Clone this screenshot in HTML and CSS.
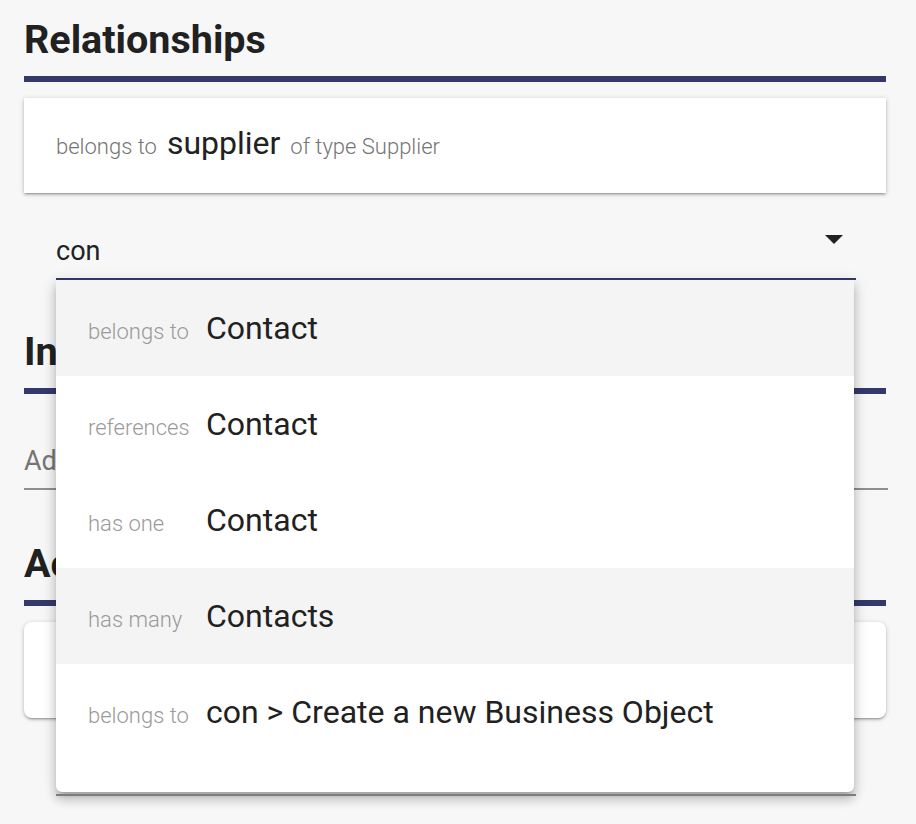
FILE: index.html
```html
<!DOCTYPE html>
<html lang="en">
<head>
    <meta charset="UTF-8">
    <title>Business Object - Relationships</title>
    <link rel="stylesheet" href="styles.css">
</head>
<body>

    <div class="page">

        <!-- Relationships -->
        <section class="section section-first">
            <h2 class="section-title">Relationships</h2>

            <div class="card relation-card">
                <span class="relation">
                    <span class="relation-kind">belongs to</span>
                    <span class="relation-name">supplier</span>
                    <span class="relation-kind">of type Supplier</span>
                </span>
            </div>

            <div class="field field-active">
                <input class="field-input" type="text" value="con">
                <svg class="field-arrow" viewBox="7 10 10 5" width="18" height="9">
                    <path d="M7 10l5 5 5-5z" fill="#212121"/>
                </svg>

                <!-- Autocomplete suggestions -->
                <ul class="menu">
                    <li class="menu-item active">
                        <span class="menu-kind">belongs to</span>
                        <span class="menu-target">Contact</span>
                    </li>
                    <li class="menu-item">
                        <span class="menu-kind">references</span>
                        <span class="menu-target">Contact</span>
                    </li>
                    <li class="menu-item">
                        <span class="menu-kind">has one</span>
                        <span class="menu-target">Contact</span>
                    </li>
                    <li class="menu-item active">
                        <span class="menu-kind">has many</span>
                        <span class="menu-target">Contacts</span>
                    </li>
                    <li class="menu-item">
                        <span class="menu-kind">belongs to</span>
                        <span class="menu-target">con &gt; Create a new Business Object</span>
                    </li>
                </ul>
            </div>
        </section>

        <!-- Inheritance -->
        <section class="section section-second">
            <h2 class="section-title">Inheritance</h2>
            <div class="field field-plain">
                <input class="field-input" type="text" placeholder="Add a parent">
            </div>
        </section>

        <!-- Actions -->
        <section class="section section-third">
            <h2 class="section-title">Actions</h2>
            <div class="card action-card">
                <span class="action-label">Create</span>
                <svg class="action-arrow" viewBox="0 0 24 24" width="24" height="24">
                    <path d="M10 17l5-5-5-5v10z" fill="#757575"/>
                </svg>
            </div>
        </section>

    </div>

</body>
</html>
```

FILE: styles.css
```css
body {
    margin: 0;
    background-color: #f7f7f7;
    color: #212121;
    font-family: Roboto, "Liberation Sans", sans-serif;
}

.page {
    min-height: 824px;
    box-sizing: border-box;
    padding: 0 30px 40px 24px;
}

.section-first {
    padding-top: 16px;
}

.section-second {
    margin-top: 48px;
}

.section-third {
    margin-top: 50px;
}

.section-title {
    margin: 0;
    padding-bottom: 12px;
    border-bottom: 6px solid #333a6b;
    font-size: 39.5px;
    line-height: 48px;
    font-weight: 700;
}

.card {
    background: #fff;
    box-shadow: 0 1px 5px rgba(0, 0, 0, 0.2), 0 2px 2px rgba(0, 0, 0, 0.14), 0 3px 1px -2px rgba(0, 0, 0, 0.12);
}

.relation-card {
    margin-top: 16px;
    height: 95px;
    box-sizing: border-box;
    padding: 0 32px 6px;
    display: flex;
    align-items: center;
}

.relation {
    display: flex;
    align-items: baseline;
    gap: 10px;
}

.relation-kind {
    font-size: 22px;
    font-weight: 300;
    color: #757575;
}

.relation-name {
    font-size: 32px;
}

/* text fields */
.field {
    position: relative;
}

.field-input {
    display: block;
    width: 100%;
    box-sizing: border-box;
    border: none;
    background: transparent;
    font-family: inherit;
    font-size: 27px;
    line-height: 32px;
    height: 43px;
    padding: 0 0 11px;
    color: #212121;
    outline: none;
}

.field-input::placeholder {
    color: #757575;
    opacity: 1;
}

.field-active {
    margin: 42px 30px 0 32px;
    border-bottom: 2px solid #333a6b;
}

.field-plain {
    margin: 51px -2px 0 0;
    border-bottom: 2px solid #8f8f8f;
}

.field-arrow {
    position: absolute;
    right: 13px;
    top: 0;
}

/* suggestion menu */
.menu {
    position: absolute;
    top: calc(100% + 2px);
    left: 0;
    right: 2px;
    margin: 0;
    padding: 0 0 32px;
    list-style: none;
    background: #fff;
    border-radius: 0 0 6px 6px;
    box-shadow: 0 5px 5px -3px rgba(0, 0, 0, 0.2), 0 8px 10px 1px rgba(0, 0, 0, 0.14), 0 3px 14px 2px rgba(0, 0, 0, 0.12);
    z-index: 10;
}

.menu::after {
    content: "";
    position: absolute;
    left: 0;
    right: -2px;
    bottom: -4px;
    height: 2px;
    background: #7d7d7d;
}

.menu-item {
    display: flex;
    align-items: baseline;
    height: 96px;
    padding: 0 32px;
    line-height: 96px;
}

.menu-item.active {
    background: #f4f4f4;
}

.menu-kind {
    width: 118px;
    flex-shrink: 0;
    font-size: 22px;
    font-weight: 300;
    color: #9a9a9a;
}

.menu-target {
    font-size: 32px;
    color: #212121;
}

/* actions */
.action-card {
    margin-top: 16px;
    height: 96px;
    border-radius: 8px;
    display: flex;
    align-items: center;
    justify-content: space-between;
    padding: 0 24px 0 32px;
}

.action-label {
    font-size: 27px;
}

.action-arrow {
    margin-right: 2px;
}
```
